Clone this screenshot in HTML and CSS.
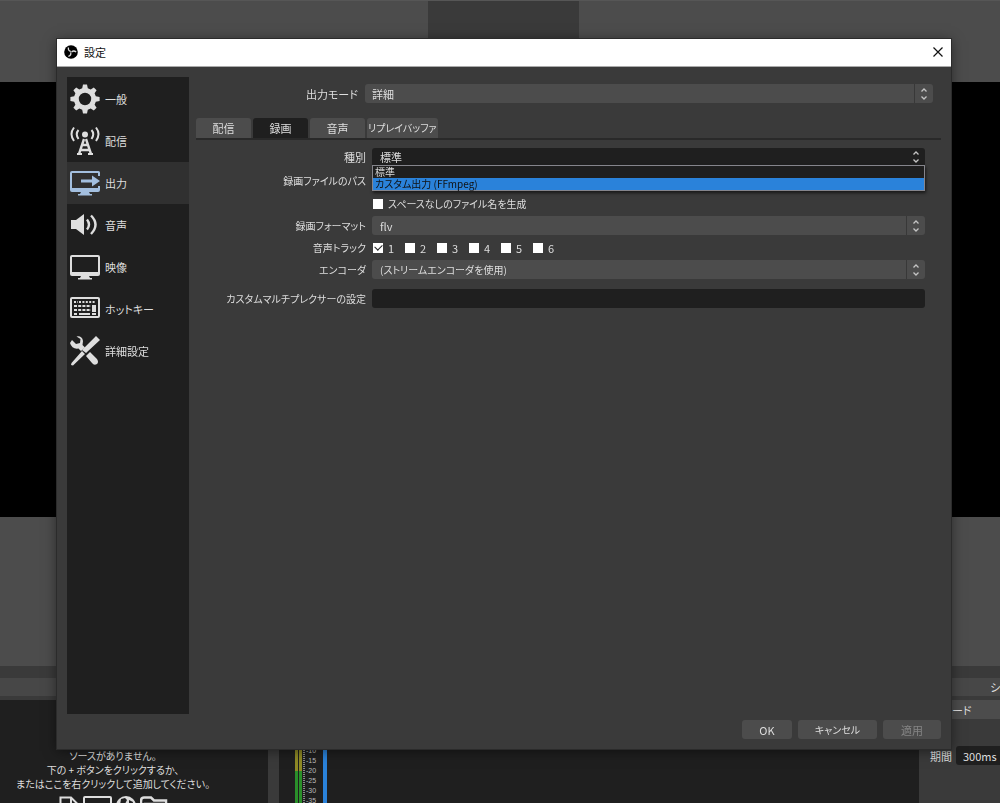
FILE: index.html
```html
<!DOCTYPE html>
<html lang="ja">
<head>
<meta charset="utf-8">
<meta name="viewport" content="width=device-width, initial-scale=1">
<title>設定</title>
<link rel="stylesheet" href="styles.css">
</head>
<body>
<svg class="defs" aria-hidden="true">
  <symbol id="updown" viewBox="0 0 8 14"><path d="M1.500 4.500 4 2 6.500 4.500M1.500 9.500 4 12 6.500 9.500" fill="none" stroke="#c4c4c4" stroke-width="1.300"/></symbol>
</svg>

<div class="app">
  <div class="preview-top"><div class="preview-tab"></div></div>
  <div class="canvas"></div>
  <div class="preview-bottom"></div>
  <div class="dock-gap"></div>
  <div class="dock-titles"><span>シーントランジション</span></div>
  <div class="docks">
    <section class="sources">
      <p>ソースがありません。<br>下の + ボタンをクリックするか、<br>またはここを右クリックして追加してください。</p>
      <div class="source-icons">
        <svg width="20" height="24" viewBox="0 0 20 24"><path d="M1.5 24V1.5H12L18.500 8V24M12 1.500V8H18" fill="none" stroke="#ddd" stroke-width="2"/></svg>
        <svg width="29" height="24" viewBox="0 0 29 24"><rect x="1" y="1" width="27" height="18" rx="1" fill="none" stroke="#ddd" stroke-width="2"/></svg>
        <svg width="20" height="24" viewBox="0 0 20 24"><circle cx="10" cy="10" r="10" fill="#ddd"/><path d="M5 3 9 2 11 4 9 8 4 9ZM13 4 17 6 16 11 13 9Z" fill="#1f1f1f"/></svg>
        <svg width="28" height="24" viewBox="0 0 28 24"><path d="M1 23V5Q1 1.500 4 1.500H11L14 4.500H26V23M5 23V8H24" fill="none" stroke="#ddd" stroke-width="2.500"/></svg>
      </div>
    </section>
    <section class="mixer">
      <div class="meter"></div><div class="meter"></div>
      <ol class="scale"><li>-10</li><li>-15</li><li>-20</li><li>-25</li><li>-30</li><li>-35</li></ol>
      <div class="fader"></div>
    </section>
    <section class="transitions">
      <button class="fade" type="button">ード</button>
      <label class="duration">期間 <input type="text" value="300ms"></label>
    </section>
  </div>
</div>

<main class="dialog" role="dialog" aria-labelledby="dialog-title">
  <header class="titlebar">
    <svg width="14" height="14" viewBox="0 0 14 14" aria-hidden="true"><circle cx="7" cy="7" r="6.800" fill="#000"/><g fill="none" stroke="#ddd" stroke-width="1.300"><path d="M6.800 6.500C5 6 4 4.500 4.500 2.500"/><path d="M6.800 6.500C5 6 4 4.500 4.500 2.500" transform="rotate(120 7 7)"/><path d="M6.800 6.500C5 6 4 4.500 4.500 2.500" transform="rotate(240 7 7)"/></g></svg>
    <h1 id="dialog-title">設定</h1>
    <button class="close" type="button" aria-label="閉じる"><svg width="10" height="10" viewBox="0 0 10 10"><path d="M.5.5 9.500 9.500M9.500.5.5 9.500" stroke="#111" stroke-width="1.200"/></svg></button>
  </header>
  <div class="body">
    <nav class="sidebar">
      <button type="button"><svg viewBox="0 0 30 30"><path fill="currentColor" fill-rule="evenodd" d="M12.200 4.200 13 .5H17L17.800 4.200 20.700 5.400 23.800 3.400 26.600 6.200 24.600 9.300 25.800 12.200 29.600 13V17L25.800 17.800 24.600 20.700 26.600 23.800 23.800 26.600 20.700 24.600 17.800 25.800 17 29.500H13L12.200 25.800 9.300 24.600 6.200 26.600 3.400 23.800 5.400 20.700 4.200 17.800.4 17V13L4.200 12.200 5.400 9.300 3.400 6.200 6.200 3.400 9.300 5.400ZM15 8.800A6.200 6.200 0 1 0 15 21.200 6.200 6.200 0 1 0 15 8.800Z"/></svg>一般</button>
      <button type="button"><svg viewBox="0 0 30 30"><circle cx="15" cy="8.500" r="3" fill="currentColor"/><g fill="none" stroke="currentColor" stroke-width="2"><path d="M4 1.500Q-1 8 4 15M8.500 4Q5 8 8.500 13M26 1.500Q31 8 26 15M21.500 4Q25 8 21.500 13"/><path d="M14 13 9 28M16 13 21 28M12 19H18M10.500 24H19.500" stroke-width="2.400"/><path d="M7 28H12M18 28H23"/></g></svg>配信</button>
      <button type="button" class="selected" aria-current="page"><svg viewBox="0 0 30 30"><g fill="#a3bfdf"><path d="M2 3H28.500Q30 3 30 4.500V8H28V5H2V20H28V18H30V22Q30 24 28 24H19L20 26H22V27.500H8V26H10L11 24H2Q0 24 0 22V5Q0 3 2 3Z"/><path d="M11 11.500H22V7.500L30 13 22 18.500V14.500H11Z"/></g></svg>出力</button>
      <button type="button"><svg viewBox="0 0 30 30"><path d="M1 10H6L14 4V25L6 19H1Z" fill="currentColor"/><path d="M17 9.500Q21 14.500 17 19.500M21 5.500Q30 14.500 21 24" fill="none" stroke="currentColor" stroke-width="2.400"/></svg>音声</button>
      <button type="button"><svg viewBox="0 0 30 30"><path fill="currentColor" fill-rule="evenodd" d="M2 3H28Q30 3 30 5V22Q30 24 28 24H19L20 26H22V27.500H8V26H10L11 24H2Q0 24 0 22V5Q0 3 2 3ZM2 5V20H28V5Z"/></svg>映像</button>
      <button type="button"><svg viewBox="0 0 30 30"><rect x="1" y="4" width="28" height="19" rx="1" fill="none" stroke="currentColor" stroke-width="2"/><g fill="none" stroke="currentColor" stroke-width="2"><path d="M4 8H8M9 8H26" stroke-dasharray="2 1.400"/><path d="M4 12H21M4 16H21" stroke-dasharray="3 1.200"/><path d="M4 20H7M9 20H20M22 20H26"/><path d="M24 11V18" stroke-width="4"/></g></svg>ホットキー</button>
      <button type="button"><svg viewBox="0 0 30 30"><g fill="currentColor"><path d="M26 0 30 4 16 17 12 14ZM12 15 15 18 3 29.500 1 29 1.500 27Z"/><path d="M2 4 6 8 10 7 10.500 3 6.500.5Q12-.5 13 5L12.500 9 15 11.500 11 15 8.500 12.500Q2 13.500 0 7ZM16 20 20 16 27 23Q29 26 27 28 24 30 22 27Z"/></g></svg>詳細設定</button>
    </nav>
    <section class="content">
      <div class="mode">
        <label for="mode">出力モード</label>
        <div class="combo"><select id="mode"><option>詳細</option></select><span class="arrows"><svg><use href="#updown"/></svg></span></div>
      </div>
      <div class="tabs" role="tablist">
        <button type="button" role="tab">配信</button>
        <button type="button" role="tab" class="active" aria-selected="true">録画</button>
        <button type="button" role="tab">音声</button>
        <button type="button" role="tab" class="kana">リプレイバッファ</button>
      </div>
      <form class="form">
        <label for="kind">種別</label>
        <div class="combo open"><select id="kind"><option>標準</option><option>カスタム出力 (FFmpeg)</option></select><span class="arrows"><svg><use href="#updown"/></svg></span>
          <ul class="popup" role="listbox" aria-label="種別"><li role="option">標準</li><li role="option" class="hover" aria-selected="true">カスタム出力 (FFmpeg)</li></ul>
        </div>
        <label class="kana" for="path">録画ファイルのパス</label>
        <input class="text" id="path" type="text">
        <span></span>
        <label class="check kana"><input type="checkbox">スペースなしのファイル名を生成</label>
        <label class="kana" for="format">録画フォーマット</label>
        <div class="combo inset"><select id="format"><option>flv</option></select><span class="arrows"><svg><use href="#updown"/></svg></span></div>
        <span class="kana" id="tracks">音声トラック</span>
        <div class="tracks" role="group" aria-labelledby="tracks">
          <label class="check"><input type="checkbox" checked>1</label>
          <label class="check"><input type="checkbox">2</label>
          <label class="check"><input type="checkbox">3</label>
          <label class="check"><input type="checkbox">4</label>
          <label class="check"><input type="checkbox">5</label>
          <label class="check"><input type="checkbox">6</label>
        </div>
        <label class="kana" for="encoder">エンコーダ</label>
        <div class="combo inset kana"><select id="encoder"><option>(ストリームエンコーダを使用)</option></select><span class="arrows"><svg><use href="#updown"/></svg></span></div>
        <label class="mux kana" for="mux">カスタムマルチプレクサーの設定</label>
        <input class="mux text" id="mux" type="text">
      </form>
    </section>
  </div>
  <footer class="actions">
    <button type="button" class="ok">OK</button>
    <button type="button" class="cancel kana">キャンセル</button>
    <button type="button" class="apply" disabled>適用</button>
  </footer>
</main>
</body>
</html>
```
FILE: styles.css
```css
* { box-sizing: border-box; }
body {
  margin: 0;
  background: #1f1f1f;
  color: #dedede;
  font: 11px/14px "Noto Sans CJK JP", sans-serif;
  font-feature-settings: "palt";
  overflow: hidden;
}
button, input, select { font: inherit; font-feature-settings: inherit; color: inherit; border: 0; margin: 0; padding: 0; background: none; }
.defs { display: none; }
.kana { font-size: 10px; }

/* Main window */
.app { display: flex; flex-direction: column; height: 100vh; }
.preview-top { height: 82px; flex: none; background: #4c4c4c; border-top: 1px solid #565656; display: flex; justify-content: center; }
.preview-tab { width: 151px; height: 44px; margin-left: 7px; background: #3a3a3a; }
.canvas { flex: 1; background: #000; }
.preview-bottom { height: 149px; flex: none; background: #4c4c4c; }
.dock-gap { height: 12px; flex: none; background: #3a3a3a; }
.dock-titles { height: 22px; flex: none; background: #474747; border-bottom: 4px solid #3a3a3a; display: flex; justify-content: flex-end; align-items: center; }
.dock-titles span { width: 10px; overflow: hidden; white-space: nowrap; }
.docks { height: 103px; flex: none; display: flex; overflow: hidden; }
.sources { width: 268px; padding: 49px 42px 0 0; display: flex; flex-direction: column; align-items: center; }
.sources p { margin: 0; font-size: 10px; text-align: center; white-space: nowrap; }
.source-icons { display: flex; gap: 4px; margin-top: 5px; }
.mixer { flex: 1; border-left: 11px solid #3a3a3a; padding: 46px 0 0 16px; display: flex; }
.meter { width: 3px; margin-right: 1px; background: linear-gradient(#8f8a25 25px, #2a8f2a 25px); }
.scale { list-style: none; margin: 0 7px 0 0; padding: 0 0 0 3px; width: 13px; font: 7px/10px "Liberation Sans", sans-serif; color: #bbb; background: repeating-linear-gradient(#888 0 1px, transparent 1px 2px) 0 0 / 2px 100% no-repeat; }
.scale li { height: 10px; white-space: nowrap; }
.fader { width: 4px; background: #2a82da; }
.transitions { width: 81px; background: #3a3a3a; display: flex; flex-direction: column; }
.fade { height: 19px; background: #4c4c4c; text-align: left; padding-left: 33px; }
.duration { display: flex; gap: 4px; align-items: center; margin-top: 27px; padding-left: 11px; white-space: nowrap; }
.duration input { flex: 1; min-width: 0; height: 19px; padding-left: 7px; background: #1f1f1f; border-radius: 3px 0 0 3px; }

/* Settings dialog, floating over the main window */
.dialog { position: fixed; inset: 39px 49px 54px 57px; display: flex; flex-direction: column; background: #3a3a3a; box-shadow: 0 0 0 1px #2b2b2b, 0 2px 12px rgba(0, 0, 0, .5); }
.titlebar { height: 28px; flex: none; padding: 0 8px 1px 7px; display: flex; align-items: center; background: #fff; color: #111; border-bottom: 1px solid #aaa; }
.titlebar h1 { margin: 0 0 0 6px; flex: 1; font-size: 11px; font-weight: 400; }
.close { display: flex; }
.body { flex: 1; display: flex; gap: 7px; padding: 10px 10px 0 10px; }
.sidebar { width: 122px; background: #1f1f1f; padding: 1px 0; display: flex; flex-direction: column; }
.sidebar button { height: 42px; display: flex; align-items: center; gap: 5px; padding-left: 3px; color: #dedede; text-align: left; }
.sidebar svg { width: 30px; height: 30px; flex: none; }
.sidebar .selected { background: #303030; }
.content { flex: 1; min-width: 0; }
.mode { display: grid; grid-template-columns: 162px 1fr; gap: 7px; align-items: center; margin: 7px 8px 15px 0; text-align: right; }

.combo { position: relative; height: 19px; display: flex; background: #4c4c4c; border-radius: 3px; }
.combo select { appearance: none; width: 100%; padding-left: 7px; border-radius: 3px; }
.combo option { background: #1f1f1f; }
.inset select, .open select { padding-left: 8px; }
.arrows { position: absolute; inset: 0 0 0 auto; width: 19px; display: flex; align-items: center; justify-content: center; border-left: 1px solid #383838; pointer-events: none; }
.arrows svg { width: 8px; height: 14px; }
.open { background: #1f1f1f; }
.open .arrows { border-color: transparent; }
.popup { position: absolute; top: 17px; left: 0; right: 0; z-index: 1; list-style: none; margin: 0; padding: 0; background: #1f1f1f; border: 1px solid #85858c; box-shadow: 1px 2px 3px rgba(0, 0, 0, .6); text-align: left; font-size: 10px; line-height: 12px; }
.popup li { height: 12px; padding-left: 2px; }
.popup .hover { background: #2a82da; color: #111; }

.tabs { display: flex; gap: 2px; border-bottom: 2px solid #292929; }
.tabs button { min-width: 55px; height: 20px; padding: 0 1px; background: #4c4c4c; border-radius: 3px 3px 0 0; white-space: nowrap; }
.tabs .active { background: #1f1f1f; }

.form { display: grid; grid-template-columns: 170px 1fr; column-gap: 6px; grid-template-rows: 24px 24px 21px 23px 21px 23px auto; align-items: center; padding: 5px 16px 0 0; }
.form > label:not(.check), .form > span { text-align: right; white-space: nowrap; }
.text { width: 100%; height: 19px; padding: 0 6px; background: #1f1f1f; border-radius: 3px; }
.mux { margin-top: 8px; }
.check { display: flex; align-items: center; gap: 5px; }
.check input { appearance: none; width: 10px; height: 10px; margin-left: 1px; background: #fff; position: relative; }
.check input:checked::after { content: ""; position: absolute; left: 2px; top: 1px; width: 6px; height: 4px; border: solid #222; border-width: 0 0 1px 1px; transform: rotate(-45deg); }
.tracks { display: flex; }
.tracks .check { width: 32px; }

.actions { flex: none; display: flex; justify-content: flex-end; gap: 6px; padding: 6px 10px 10px; }
.actions button { height: 19px; background: #4c4c4c; border-radius: 3px; }
.ok { width: 50px; }
.cancel { width: 79px; }
.apply { width: 58px; }
.apply:disabled { color: #858585; }
```
